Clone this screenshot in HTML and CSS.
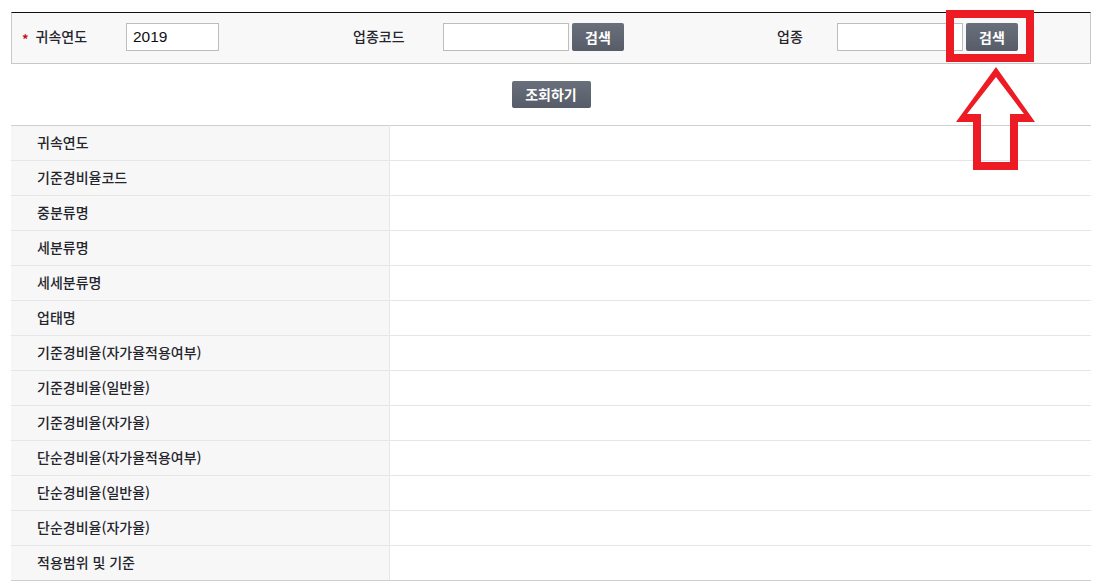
FILE: index.html
```html
<!DOCTYPE html>
<html lang="ko">
<head>
<meta charset="utf-8">
<title>기준경비율 조회</title>
<link rel="stylesheet" href="styles.css">
</head>
<body>
<div class="page">
  <div class="search">
    <div class="lbl lbl1"><span class="req">*</span>귀속연도</div>
    <input class="inp inp1" type="text" value="2019">
    <div class="lbl lbl2">업종코드</div>
    <input class="inp inp2" type="text">
    <button class="btn btn-s">검색</button>
    <div class="lbl lbl3">업종</div>
    <input class="inp inp2" type="text">
    <button class="btn btn-s">검색</button>
  </div>
  <div class="act">
    <button class="btn btn-q">조회하기</button>
  </div>
  <table class="tbl">
    <tr><th>귀속연도</th><td></td></tr>
    <tr><th>기준경비율코드</th><td></td></tr>
    <tr><th>중분류명</th><td></td></tr>
    <tr><th>세분류명</th><td></td></tr>
    <tr><th>세세분류명</th><td></td></tr>
    <tr><th>업태명</th><td></td></tr>
    <tr><th>기준경비율(자가율적용여부)</th><td></td></tr>
    <tr><th>기준경비율(일반율)</th><td></td></tr>
    <tr><th>기준경비율(자가율)</th><td></td></tr>
    <tr><th>단순경비율(자가율적용여부)</th><td></td></tr>
    <tr><th>단순경비율(일반율)</th><td></td></tr>
    <tr><th>단순경비율(자가율)</th><td></td></tr>
    <tr><th>적용범위 및 기준</th><td></td></tr>
  </table>
  <svg class="mark" width="1101" height="200" viewBox="0 0 1101 200">
    <rect x="950" y="14" width="80" height="44" fill="none" stroke="#ed1c24" stroke-width="8"/>
    <path fill="#ed1c24" fill-rule="evenodd" d="M996 67 L1035 122 L1018 122 L1018 170 L973 170 L973 122 L956 122 Z M996 77 L1024 114 L1010 114 L1010 162 L981 162 L981 114 L967 114 Z"/>
  </svg>
</div>
</body>
</html>
```
FILE: styles.css
```css
html, body {
  margin: 0;
  padding: 0;
  background: #fff;
}
.page {
  position: relative;
  padding: 12px 0 0 11px;
  width: 1080px;
  font-family: "Noto Sans CJK KR", "Noto Sans", sans-serif;
  font-size: 14px;
  font-weight: 500;
  color: #25252d;
}
.search {
  display: flex;
  align-items: center;
  height: 28px;
  padding: 10px 0 12px 0;
  background: #f8f8f8;
  border: 1px solid #c8c8c8;
  border-top: 1px solid #111;
}
.lbl {
  line-height: 28px;
  white-space: nowrap;
  position: relative;
  top: -1px;
}
.lbl1 {
  width: 114px;
  padding-left: 10px;
  box-sizing: border-box;
}
.req {
  color: #c8101a;
  font-size: 13px;
  font-weight: bold;
  margin-right: 7px;
  position: relative;
  top: 2px;
}
.lbl2 {
  margin-left: 134px;
  width: 90px;
}
.lbl3 {
  margin-left: 153px;
  width: 60px;
}
.inp {
  box-sizing: border-box;
  height: 28px;
  margin: 0;
  border: 1px solid #bdbdbd;
  background: #fff;
  font-family: "Liberation Sans", Arial, sans-serif;
  font-size: 15.5px;
  font-weight: normal;
  color: #111;
  padding: 0 6px;
  outline: none;
}
.inp1 { width: 93px; }
.inp2 { width: 126px; }
.btn {
  box-sizing: border-box;
  border: 0;
  border-radius: 2px;
  background: linear-gradient(#6a707b, #575d68);
  color: #fff;
  font-family: "Noto Sans CJK KR", sans-serif;
  font-weight: bold;
  font-size: 14px;
  padding: 0 0 1px 0;
  cursor: pointer;
}
.btn-s {
  width: 52px;
  height: 28px;
  margin-left: 3px;
}
.act {
  display: flex;
  justify-content: center;
  padding: 17px 0 17px 0;
}
.btn-q {
  width: 79px;
  height: 27px;
}
.tbl {
  width: 1080px;
  border-collapse: collapse;
  border-top: 1px solid #cfcfcf;
  border-bottom: 1px solid #cfcfcf;
}
.tbl th {
  width: 352px;
  height: 32px;
  padding: 0 0 2px 26px;
  text-align: left;
  font-weight: 500;
  background: #f7f7f7;
  border-right: 1px solid #e6e6e6;
  border-bottom: 1px solid #e6e6e6;
  white-space: nowrap;
}
.tbl td {
  height: 32px;
  padding: 0 0 2px 0;
  border-bottom: 1px solid #e6e6e6;
}
.tbl tr:last-child th,
.tbl tr:last-child td {
  border-bottom: 1px solid #cfcfcf;
}
.mark {
  position: absolute;
  left: 0;
  top: 0;
  pointer-events: none;
}
```
